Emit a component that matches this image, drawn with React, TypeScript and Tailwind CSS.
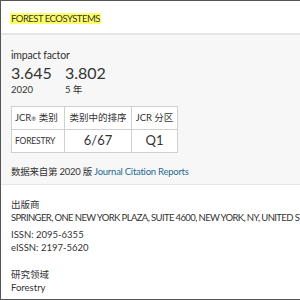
export default function App() {
  const font = { fontFamily: 'Lato, "Noto Sans CJK SC", sans-serif' };
  return (
    <div className="w-[300px] h-[300px] overflow-hidden bg-white border-l border-t border-b border-[#555] text-[#333]" style={font}>
      <div className="h-[32px] flex items-center pl-[9px] pt-[2px]">
        <span className="bg-[#ffff66] text-[9.5px] leading-[11px] px-[1px] tracking-[-0.5px]">FOREST ECOSYSTEMS</span>
      </div>
      <div className="bg-[#f7f7f7] border-t-2 border-b border-[#e6e6e6] pl-[10px] pt-[14px] h-[152px]">
        <div className="text-[10.5px] leading-[13px] tracking-[-0.2px]">impact factor</div>
        <div className="flex gap-[13px] mt-[2px]">
          <div>
            <div className="text-[16px] leading-[18px]">3.645</div>
            <div className="text-[9.5px] leading-[12px] mt-[2px]">2020</div>
          </div>
          <div>
            <div className="text-[16px] leading-[18px]">3.802</div>
            <div className="text-[9.5px] leading-[12px] mt-[2px]">5 年</div>
          </div>
        </div>
        <table className="mt-[10px] border-collapse bg-white text-[9.5px]">
          <tbody>
            <tr className="h-[23px]">
              <td className="border border-[#d0d0d0] w-[53px] px-[3px] whitespace-nowrap">JCR<span className="text-[6px] align-middle">®</span> 类别</td>
              <td className="border border-[#d0d0d0] w-[67px] text-center">类别中的排序</td>
              <td className="border border-[#d0d0d0] w-[46px] text-center">JCR 分区</td>
            </tr>
            <tr className="h-[23px]">
              <td className="border border-[#d0d0d0] px-[3px] text-[8.5px] tracking-[-0.2px]">FORESTRY</td>
              <td className="border border-[#d0d0d0] text-center text-[13px]">6/67</td>
              <td className="border border-[#d0d0d0] text-center text-[13px]">Q1</td>
            </tr>
          </tbody>
        </table>
        <div className="text-[9.5px] leading-[13px] mt-[12px] whitespace-nowrap tracking-[-0.25px]">
          数据来自第 2020 版 <span className="text-[#1f6a94]">Journal Citation Reports</span>
        </div>
      </div>
      <div className="pl-[10px] pt-[13px] text-[9.5px] leading-[13px] whitespace-nowrap">
        <div>出版商</div>
        <div className="tracking-[-0.62px]">SPRINGER, ONE NEW YORK PLAZA, SUITE 4600, NEW YORK, NY, UNITED STATES, 10004</div>
        <div className="mt-[4px]">ISSN: 2095-6355</div>
        <div>eISSN: 2197-5620</div>
        <div className="mt-[14px]">研究领域</div>
        <div>Forestry</div>
      </div>
    </div>
  );
}
